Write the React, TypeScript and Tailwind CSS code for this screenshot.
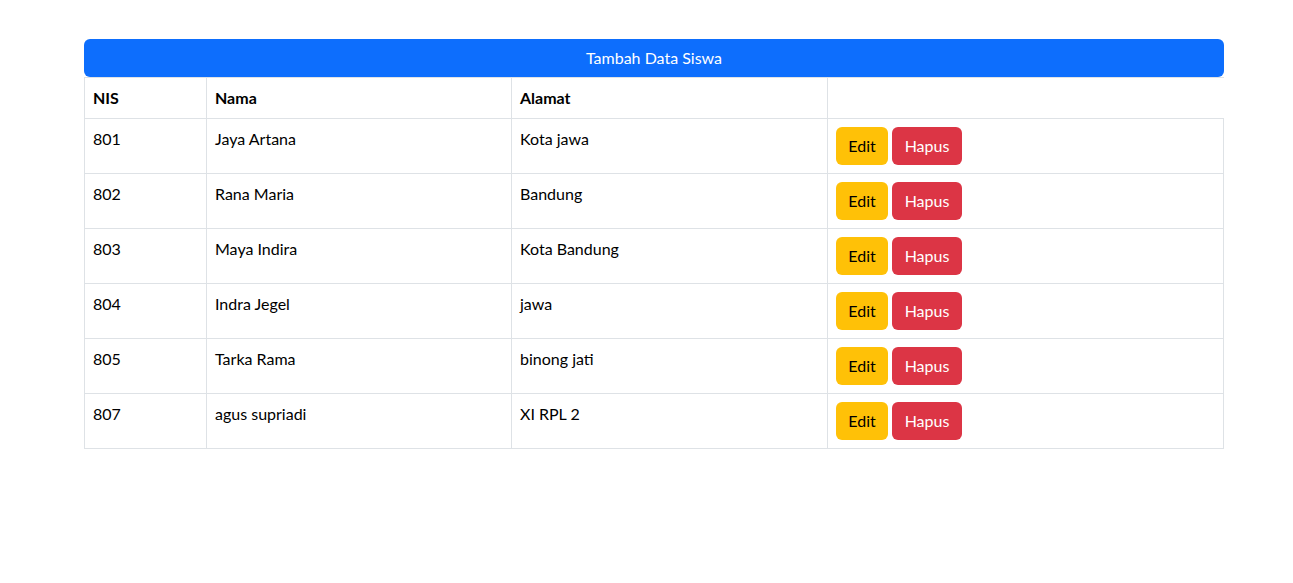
import React from "react";

const rows = [
  ["801", "Jaya Artana", "Kota jawa"],
  ["802", "Rana Maria", "Bandung"],
  ["803", "Maya Indira", "Kota Bandung"],
  ["804", "Indra Jegel", "jawa"],
  ["805", "Tarka Rama", "binong jati"],
  ["807", "agus supriadi", "XI RPL 2"],
];

export default function App() {
  return (
    <div
      className="min-h-[583px] bg-white pt-[39px] text-black"
      style={{ fontFamily: "Lato, 'Noto Sans', sans-serif" }}
    >
      <div className="ml-[84px] w-[1140px]">
        <button className="block h-[38px] w-full rounded-[6px] bg-[#0d6efd] text-[16px] font-normal text-white">
          Tambah Data Siswa
        </button>
        <table className="w-[1139px] table-fixed border-collapse text-[16px] leading-6">
          <colgroup>
            <col className="w-[122px]" />
            <col className="w-[305px]" />
            <col className="w-[316px]" />
            <col className="w-[396px]" />
          </colgroup>
          <thead>
            <tr className="h-[41px] border-t border-b border-[#dee2e6]">
              <th className="border-l border-[#dee2e6] px-2 py-2 text-left font-bold">NIS</th>
              <th className="border-l border-[#dee2e6] px-2 py-2 text-left font-bold">Nama</th>
              <th className="border-l border-[#dee2e6] px-2 py-2 text-left font-bold">Alamat</th>
              <th className="border-l border-[#dee2e6] px-2 py-2 text-left font-bold"></th>
            </tr>
          </thead>
          <tbody>
            {rows.map((r) => (
              <tr key={r[0]} className="h-[55px] border border-[#dee2e6]">
                <td className="border border-[#dee2e6] px-2 py-2 align-top">{r[0]}</td>
                <td className="border border-[#dee2e6] px-2 py-2 align-top">{r[1]}</td>
                <td className="border border-[#dee2e6] px-2 py-2 align-top">{r[2]}</td>
                <td className="border border-[#dee2e6] px-2 py-2 align-top">
                  <div className="flex gap-1">
                    <button className="h-[38px] w-[52px] rounded-[6px] bg-[#ffc107] text-black">Edit</button>
                    <button className="h-[38px] w-[70px] rounded-[6px] bg-[#dc3545] text-white">Hapus</button>
                  </div>
                </td>
              </tr>
            ))}
          </tbody>
        </table>
      </div>
    </div>
  );
}
